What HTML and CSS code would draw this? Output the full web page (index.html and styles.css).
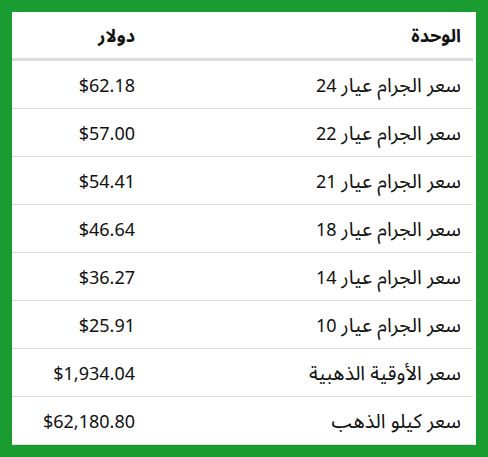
FILE: index.html
```html
<!DOCTYPE html>
<html lang="ar">
<head>
<meta charset="utf-8">
<link rel="stylesheet" href="styles.css">
</head>
<body>
<div class="frame">
  <table class="prices" dir="rtl">
    <colgroup><col class="c-unit"><col class="c-usd"></colgroup>
    <thead>
      <tr><th>الوحدة</th><th>دولار</th></tr>
    </thead>
    <tbody>
      <tr><td><span class="ar">سعر الجرام عيار</span> 24</td><td>$62.18</td></tr>
      <tr><td><span class="ar">سعر الجرام عيار</span> 22</td><td>$57.00</td></tr>
      <tr><td><span class="ar">سعر الجرام عيار</span> 21</td><td>$54.41</td></tr>
      <tr><td><span class="ar">سعر الجرام عيار</span> 18</td><td>$46.64</td></tr>
      <tr><td><span class="ar">سعر الجرام عيار</span> 14</td><td>$36.27</td></tr>
      <tr><td><span class="ar">سعر الجرام عيار</span> 10</td><td>$25.91</td></tr>
      <tr><td><span class="ar">سعر الأوقية الذهبية</span></td><td>$1,934.04</td></tr>
      <tr><td><span class="ar">سعر كيلو الذهب</span></td><td>$62,180.80</td></tr>
    </tbody>
  </table>
</div>
</body>
</html>
```
FILE: styles.css
```css
html, body {
  margin: 0;
  padding: 0;
}
body {
  background: #1b9c30;
  padding: 12px;
  font-family: "Noto Sans", "Noto Sans Arabic", "Noto Naskh Arabic", "DejaVu Sans", sans-serif;
  color: #111;
}
.frame {
  background: #fff;
  width: 461px;
  padding-right: 3px;
}
.prices {
  width: 461px;
  table-layout: fixed;
  border-collapse: separate;
  border-spacing: 0;
  font-size: 18px;
}
.c-usd { width: 135px; }
.prices th,
.prices td {
  text-align: right;
  padding: 0 12px;
  vertical-align: middle;
  white-space: nowrap;
  line-height: 24px;
}
.prices th {
  height: 46px;
  font-weight: 700;
  border-bottom: 2px solid #dcdcdc;
}
.prices td {
  height: 47px;
  border-top: 1px solid #dedede;
}
.prices tbody tr:last-child td {
  border-bottom: 1px solid #dedede;
}
.ar {
  font-size: 20px;
}
```
